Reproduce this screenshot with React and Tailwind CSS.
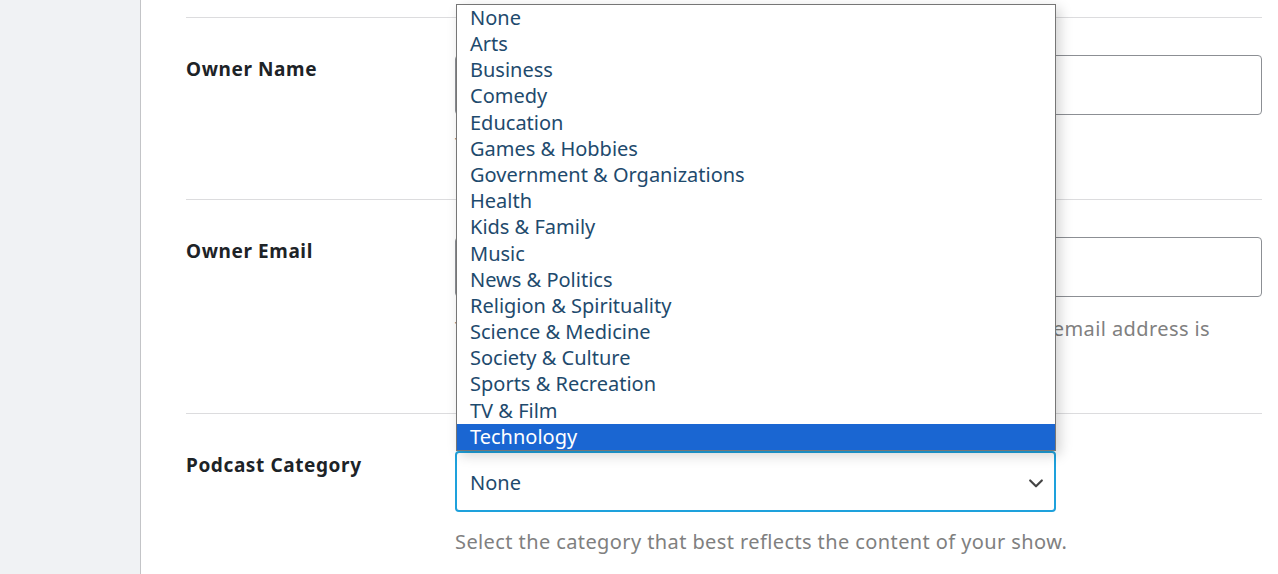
import React from 'react';

const categories = [
  'None',
  'Arts',
  'Business',
  'Comedy',
  'Education',
  'Games & Hobbies',
  'Government & Organizations',
  'Health',
  'Kids & Family',
  'Music',
  'News & Politics',
  'Religion & Spirituality',
  'Science & Medicine',
  'Society & Culture',
  'Sports & Recreation',
  'TV & Film',
  'Technology',
];

function Row({ label, children, pb }) {
  return (
    <div className={`flex border-t border-[#dcdcde] pt-[37px] ${pb}`}>
      <div className="w-[269px] shrink-0 text-[19px] font-bold leading-[28px] tracking-[0.6px] text-[#1d2327]">
        {label}
      </div>
      <div className="flex-1">{children}</div>
    </div>
  );
}

function Help({ children, mt = 'mt-[17px]' }) {
  return <p className={`${mt} text-[20px] leading-[26px] tracking-[0.4px] text-[#808080]`}>{children}</p>;
}

export default function App() {
  return (
    <div
      className="flex h-[574px] w-full overflow-hidden bg-white"
      style={{ fontFamily: '"Noto Sans", "Open Sans", sans-serif' }}
    >
      <aside className="w-[141px] shrink-0 border-r border-[#c3c4c7] bg-[#f0f2f4]" />
      <main className="flex-1 pl-[45px] pr-[16px] pt-[17px]">
        <Row label="Owner Name" pb="pb-[41px]">
          <div className="h-[60px] rounded-[4px] border border-[#8c8f94] bg-white" />
          <Help>The podcast owner's name.</Help>
        </Row>
        <Row label="Owner Email" pb="pb-[45px]">
          <div className="h-[60px] rounded-[4px] border border-[#8c8f94] bg-white" />
          <Help mt="mt-[19px]">
            The email address of the podcast owner, used in the feed. Its email address is
            <br />
            not shown publicly.
          </Help>
        </Row>
        <Row label="Podcast Category" pb="pb-8">
          <div className="relative w-[601px]">
            <ul className="absolute bottom-full left-[1px] z-10 w-[600px] border border-[#767676] bg-white shadow-[4px_4px_12px_rgba(0,0,0,0.18)]">
              {categories.map((c) => (
                <li
                  key={c}
                  className={`h-[26.2px] pl-[13px] text-[20px] leading-[26px] ${
                    c === 'Technology' ? 'bg-[#1a66d2] text-white' : 'text-[#1e4a6d]'
                  }`}
                >
                  {c}
                </li>
              ))}
            </ul>
            <div className="flex h-[61px] items-center justify-between rounded-[4px] border-2 border-[#1ea1dc] bg-white pl-[13px] pr-[8px] pt-[3px]">
              <span className="text-[20px] text-[#1e4a6d]">None</span>
              <svg width="20" height="20" viewBox="0 0 24 24" fill="none" stroke="#444" strokeWidth="2.6" strokeLinecap="round" strokeLinejoin="round">
                <path d="M5 9l7 7 7-7" />
              </svg>
            </div>
          </div>
          <Help>Select the category that best reflects the content of your show.</Help>
        </Row>
      </main>
    </div>
  );
}
